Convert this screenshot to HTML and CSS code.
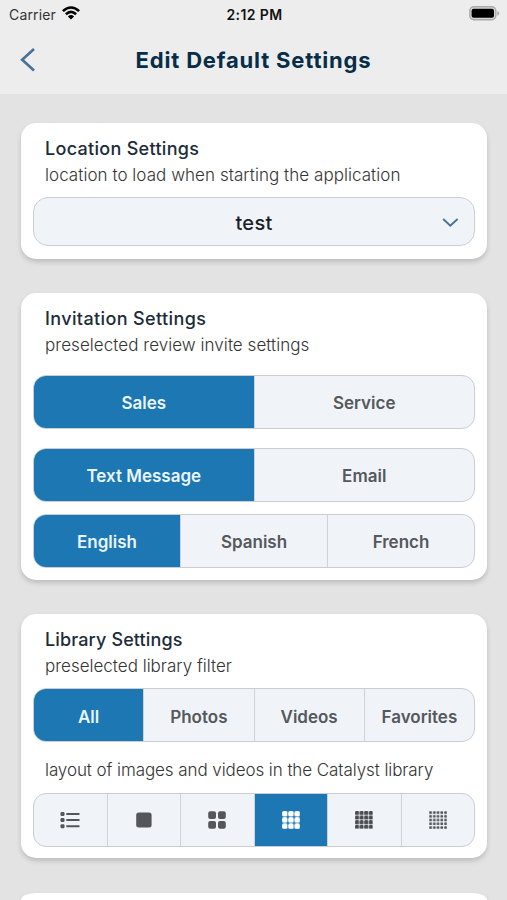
FILE: index.html
```html
<!DOCTYPE html>
<html lang="en">
<head>
<meta charset="utf-8">
<meta name="viewport" content="width=device-width, initial-scale=1">
<title>Edit Default Settings</title>
<link rel="stylesheet" href="styles.css">
</head>
<body>
<header class="top">
  <div class="status">
    <div class="status-left"><span class="carrier">Carrier</span>
      <svg class="wifi" width="18" height="14" viewBox="0 0 18 14"><path d="M0 4.2Q9-3.9 18 4.2L16.2 6.1Q9-.5 1.8 6.1ZM3 7.3Q9 1.9 15 7.3L13.2 9.2Q9 5.3 4.8 9.2ZM5.9 10.4Q9 7.6 12.1 10.4L9 13.6Z"/></svg>
    </div>
    <span class="clock">2:12 PM</span>
    <svg class="battery" width="31" height="15" viewBox="0 0 31 15"><rect x=".8" y=".8" width="26" height="13" rx="4" fill="#d8d8d8" stroke="#aaa" stroke-width="1.4"/><rect x="2.6" y="2.8" width="22.4" height="9" rx="2" fill="#000"/><path d="M28.3 5q2 .9 2 2.4t-2 2.4z" fill="#aaa"/></svg>
  </div>
  <nav class="nav">
    <svg class="back" width="16" height="26" viewBox="0 0 16 26"><path d="M14 2 2.2 12.7 14 23.5" fill="none" stroke="#497199" stroke-width="2.7"/></svg>
    <h1 class="title">Edit Default Settings</h1>
  </nav>
</header>
<main class="content">
  <section class="card">
    <h2 class="heading h-location">Location Settings</h2>
    <p class="note n-location">location to load when starting the application</p>
    <div class="select"><span class="value">test</span>
      <svg class="chevron" width="17" height="10" viewBox="0 0 17 10"><path d="m1.2 1 7.1 6.7L15.6 1" fill="none" stroke="#497199" stroke-width="1.9"/></svg>
    </div>
  </section>
  <section class="card">
    <h2 class="heading h-invite">Invitation Settings</h2>
    <p class="note n-invite">preselected review invite settings</p>
    <div class="segments kind"><span class="seg on">Sales</span><span class="seg">Service</span></div>
    <div class="segments channel"><span class="seg on">Text Message</span><span class="seg">Email</span></div>
    <div class="segments language"><span class="seg on">English</span><span class="seg">Spanish</span><span class="seg">French</span></div>
  </section>
  <section class="card">
    <h2 class="heading h-library">Library Settings</h2>
    <p class="note n-library">preselected library filter</p>
    <div class="segments filter"><span class="seg on">All</span><span class="seg">Photos</span><span class="seg">Videos</span><span class="seg">Favorites</span></div>
    <p class="note n-layout">layout of images and videos in the Catalyst library</p>
    <div class="segments layouts">
      <span class="seg"><svg class="icon" width="20" height="18" viewBox="0 0 20 18"><g><rect x=".5" y="1" width="4" height="4" rx="1.2"/><rect x=".5" y="7" width="4" height="4" rx="1.2"/><rect x=".5" y="13.2" width="4" height="4" rx="1.2"/><path d="M6.3 2h13.2v2H6.3zM6.3 8.1h13.2v2H6.3zM6.3 14.3h13.2v2H6.3z"/></g></svg></span>
      <span class="seg"><svg class="icon" width="18" height="18" viewBox="0 0 18 18"><rect x="1.2" y="1.5" width="15.4" height="15" rx="2.5"/></svg></span>
      <span class="seg"><svg class="icon" width="18" height="18" viewBox="0 0 18 18"><rect x=".2" y=".2" width="7.8" height="7.9" rx="2"/><rect x="10" y=".2" width="7.8" height="7.9" rx="2"/><rect x=".2" y="10" width="7.8" height="7.8" rx="2"/><rect x="10" y="10" width="7.8" height="7.8" rx="2"/></svg></span>
      <span class="seg on"><svg class="icon" width="18" height="18" viewBox="0 0 18 18"><defs><pattern id="g3" width="6.2" height="6.2" patternUnits="userSpaceOnUse"><rect x=".1" y=".1" width="5.4" height="5.4" rx="1.6" fill="#fff"/></pattern></defs><rect width="18" height="18" fill="url(#g3)"/></svg></span>
      <span class="seg"><svg class="icon" width="18" height="18" viewBox="0 0 18 18"><defs><pattern id="g4" width="4.6" height="4.6" patternUnits="userSpaceOnUse"><rect x=".1" y=".1" width="3.9" height="3.9" rx="1.1" fill="#4a4b50"/></pattern></defs><rect width="18" height="18" fill="url(#g4)"/></svg></span>
      <span class="seg"><svg class="icon" width="18" height="18" viewBox="0 0 18 18"><defs><pattern id="g5" width="3.75" height="3.75" patternUnits="userSpaceOnUse"><rect x=".2" y=".2" width="2.7" height="2.7" rx=".7" fill="#55565a"/></pattern></defs><rect width="18" height="18" fill="url(#g5)"/></svg></span>
    </div>
  </section>
  <section class="card next"></section>
</main>
</body>
</html>
```
FILE: styles.css
```css
* { box-sizing: border-box; }
body { margin: 0; height: 900px; overflow: hidden; background: #e3e3e3; font-family: Inter, "Liberation Sans", sans-serif; }
h1, h2, p { margin: 0; }
.top { height: 94px; background: #ededed; }
.status { height: 28px; display: grid; grid-template-columns: 1fr auto 1fr; align-items: center; padding: 0 7px 0 9px; }
.status-left { display: flex; align-items: center; gap: 6px; }
.carrier { font-size: 14px; letter-spacing: .15px; color: #333; }
.wifi { margin-top: -2px; }
.clock { font-size: 14px; font-weight: 600; letter-spacing: .4px; color: #111; }
.battery { justify-self: end; margin-top: -1px; }
.nav { height: 64px; display: grid; grid-template-columns: 40px 1fr 40px; align-items: center; }
.back { margin-left: 20px; margin-top: -1px; }
.title { text-align: center; font-size: 22px; font-weight: 700; color: #082d48; white-space: nowrap; letter-spacing: .83px; }
.content { padding: 29px 20px 0 21px; }
.card { height: 136px; margin-bottom: 34px; padding: 12px; border-radius: 15px; background: #fff; box-shadow: 0 3px 5px rgba(0,0,0,.17); }
.card:nth-child(2) { height: 287px; }
.card:nth-child(3) { height: 244px; margin-bottom: 35px; }
.card.next { height: 7px; margin: 0; padding: 0; border-radius: 15px 15px 0 0 / 7px 7px 0 0; }
.heading { height: 26px; line-height: 28px; padding-left: 12px; font-size: 18px; font-weight: 500; color: #202b39; white-space: nowrap; }
.h-location { letter-spacing: .3px; }
.h-invite { letter-spacing: .38px; }
.h-library { letter-spacing: .13px; }
.note { height: 26px; line-height: 28px; padding-left: 12px; font-size: 17px; font-weight: 300; color: #343434; white-space: nowrap; }
.n-location, .n-invite { letter-spacing: .05px; }
.n-layout { letter-spacing: -.08px; }
.select { height: 49px; margin-top: 10px; display: grid; grid-template-columns: 36px 1fr 36px; align-items: center; border: 1px solid #caced2; border-radius: 15px; background: #f0f4f8; }
.value { grid-column: 2; padding-top: 2px; text-align: center; font-size: 20px; font-weight: 500; letter-spacing: .3px; color: #1b2026; }
.chevron { margin: 2px 0 0 4px; }
.segments { height: 54px; display: flex; overflow: hidden; border: 1px solid #caced2; border-radius: 13px; background: #f0f4f8; }
.seg { flex: 1 1 0; display: flex; align-items: center; justify-content: center; padding-top: 2px; font-size: 17px; font-weight: 600; color: #55585c; }
.seg + .seg { border-left: 1px solid #cfd3d7; }
.seg.on { background: #1d77b2; color: #e9f5ff; }
.kind { margin-top: 18px; }
.channel { margin-top: 19px; }
.language { margin-top: 12px; }
.filter { margin-top: 10px; margin-bottom: 14px; }
.filter .seg { padding-top: 3px; }
.layouts { margin-top: 11px; }
.layouts .seg { padding-top: 0; }
.icon { display: block; fill: #55565a; }
```
